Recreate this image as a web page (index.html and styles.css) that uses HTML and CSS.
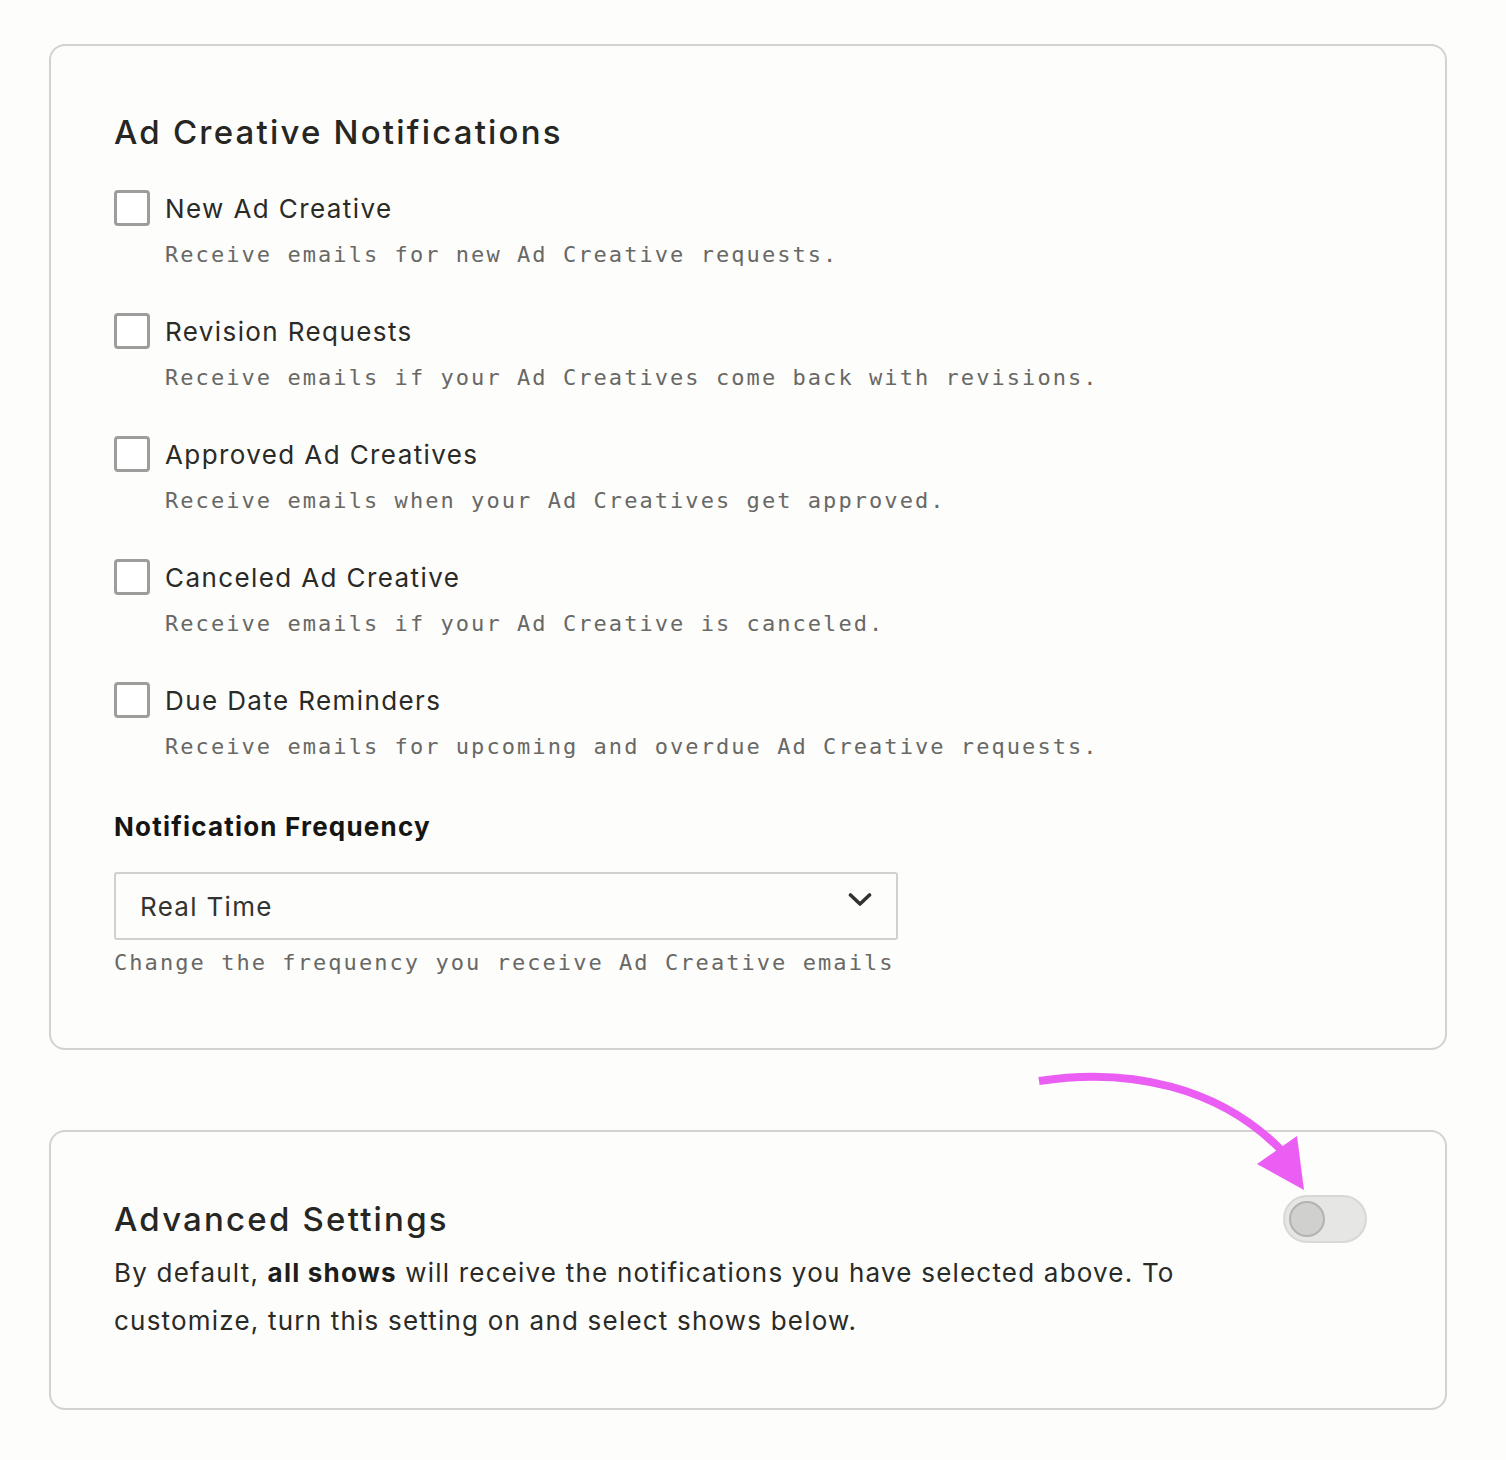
FILE: index.html
```html
<!DOCTYPE html>
<html lang="en">
<head>
  <meta charset="UTF-8">
  <meta name="viewport" content="width=device-width, initial-scale=1.0">
  <title>Notification Settings</title>
  <link rel="stylesheet" href="styles.css">
</head>
<body>
  <div class="page">
    <section class="card">
      <h2 class="card-title">Ad Creative Notifications</h2>

      <div class="option">
        <label class="option-row"><span class="checkbox"></span>New Ad Creative</label>
        <p class="hint">Receive emails for new Ad Creative requests.</p>
      </div>
      <div class="option">
        <label class="option-row"><span class="checkbox"></span>Revision Requests</label>
        <p class="hint">Receive emails if your Ad Creatives come back with revisions.</p>
      </div>
      <div class="option">
        <label class="option-row"><span class="checkbox"></span>Approved Ad Creatives</label>
        <p class="hint">Receive emails when your Ad Creatives get approved.</p>
      </div>
      <div class="option">
        <label class="option-row"><span class="checkbox"></span>Canceled Ad Creative</label>
        <p class="hint">Receive emails if your Ad Creative is canceled.</p>
      </div>
      <div class="option">
        <label class="option-row"><span class="checkbox"></span>Due Date Reminders</label>
        <p class="hint">Receive emails for upcoming and overdue Ad Creative requests.</p>
      </div>

      <div class="field">
        <div class="field-label">Notification Frequency</div>
        <div class="select">
          <span>Real Time</span>
          <svg class="chevron" width="24" height="16" viewBox="0 0 24 16">
            <path d="M2.5 3 L12 12 L21.5 3" fill="none" stroke="#333331" stroke-width="3.6" stroke-linecap="round" stroke-linejoin="round"/>
          </svg>
        </div>
        <p class="hint flush">Change the frequency you receive Ad Creative emails</p>
      </div>
    </section>

    <section class="card advanced">
      <div class="advanced-head">
        <h2 class="card-title">Advanced Settings</h2>
        <span class="toggle"><span class="knob"></span></span>
      </div>
      <p class="body-text">By default, <strong>all shows</strong> will receive the notifications you have selected above. To customize, turn this setting on and select shows below.</p>
    </section>

    <!-- annotation arrow pointing at the toggle -->
    <svg class="callout" width="290" height="135" viewBox="0 0 290 135">
      <path d="M9 16 C 100 2, 190 22, 252 86" fill="none" stroke="#ea5ef3" stroke-width="8"/>
      <polygon points="227,99 267,71 274,125" fill="#ea5ef3"/>
    </svg>
  </div>
</body>
</html>
```

FILE: styles.css
```css
* {
  box-sizing: border-box;
}
body {
  margin: 0;
  background: #fdfdfc;
  color: #2a2a27;
  font-family: Inter, 'Liberation Sans', sans-serif;
}
.page {
  position: relative;
  padding: 44px 0 51px 49px;
}
.card {
  width: 1398px;
  border: 2px solid #d2d2d0;
  border-radius: 16px;
  padding: 66px 64px 70px 63px;
  background: #fdfdfc;
}
.card + .card {
  margin-top: 80px;
}
.card-title {
  margin: 0;
  font-size: 33px;
  line-height: 40px;
  font-weight: 500;
  letter-spacing: 2.2px;
  color: #262623;
}
.option {
  margin-top: 43px;
}
.card-title + .option {
  margin-top: 38px;
}
.option-row {
  display: flex;
  align-items: center;
  gap: 15px;
  height: 36px;
  font-size: 26px;
  letter-spacing: 1.4px;
}
.checkbox {
  width: 36px;
  height: 36px;
  border: 3px solid #9d9d9b;
  border-radius: 4px;
  background: #fff;
}
.hint {
  margin: 14px 0 0 51px;
  font-family: 'DejaVu Sans Mono', 'Liberation Mono', monospace;
  font-size: 22px;
  line-height: 30px;
  letter-spacing: 2.06px;
  color: #686865;
}
.hint.flush {
  margin: 8px 0 0;
}
.field {
  margin-top: 47px;
}
.field-label {
  font-size: 26px;
  line-height: 36px;
  font-weight: 700;
  letter-spacing: 1.2px;
  color: #151513;
}
.select {
  display: flex;
  align-items: center;
  justify-content: space-between;
  width: 784px;
  height: 68px;
  margin-top: 27px;
  padding: 0 24px;
  border: 2px solid #d0d0ce;
  border-radius: 3px;
  background: #fdfdfb;
  font-size: 26px;
  letter-spacing: 1.3px;
  color: #333331;
}
.chevron {
  margin-top: -12px;
}
.advanced {
  padding: 63px 64px 63px 63px;
}
.advanced-head {
  display: flex;
  align-items: center;
  justify-content: space-between;
  padding-right: 14px;
}
.toggle {
  position: relative;
  width: 84px;
  height: 48px;
  border: 2px solid #d8d8d6;
  border-radius: 24px;
  background: #e6e6e5;
  display: flex;
  align-items: center;
  padding-left: 4px;
}
.knob {
  width: 36px;
  height: 36px;
  border: 2px solid #b3b3b1;
  border-radius: 50%;
  background: #d0d0cf;
}
.body-text {
  max-width: 1120px;
  margin: 6px 0 0;
  font-size: 26px;
  line-height: 48px;
  letter-spacing: 1.2px;
  color: #2a2a27;
}
.body-text strong {
  font-weight: 700;
  color: #1d1d1b;
}
.callout {
  position: absolute;
  left: 1030px;
  top: 1065px;
}
```
